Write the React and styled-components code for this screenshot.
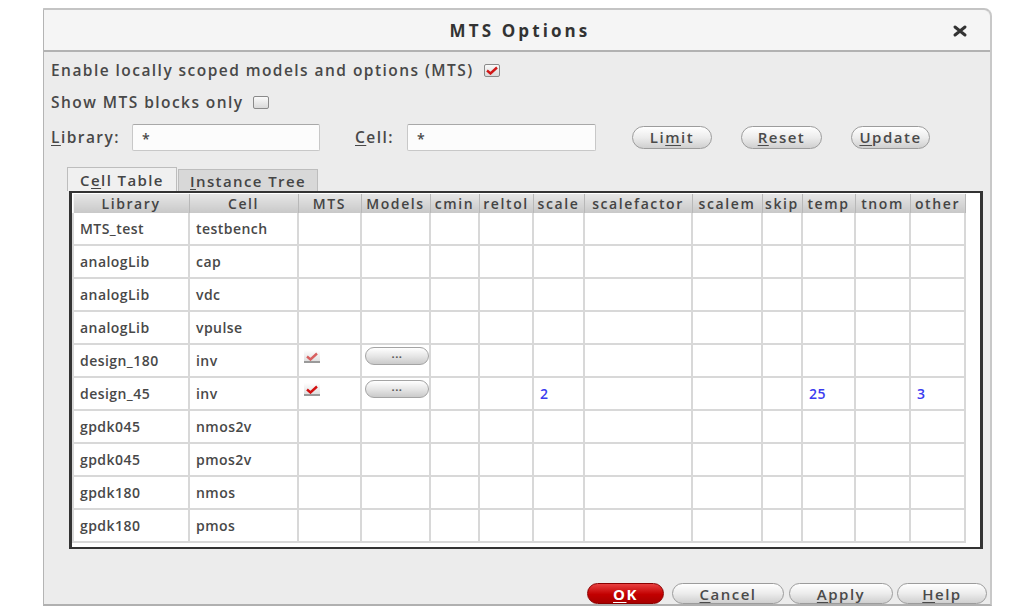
import styled, { createGlobalStyle } from "styled-components";

const Global = createGlobalStyle`
  body {
    margin: 0;
    background: #fff;
    font-family: "Open Sans", "DejaVu Sans", sans-serif;
    color: #454545;
  }
`;

const Page = styled.div`
  padding: 8px 0 0 43px;
  width: 1013px;
  height: 612px;
  box-sizing: border-box;
  overflow: hidden;
`;

const Dialog = styled.div`
  width: 949px;
  height: 598px;
  box-sizing: border-box;
  border: 1px solid #b4b4b4;
  border-top: 2px solid #c4c4c4;
  border-right: 2px solid #c8c8c8;
  border-bottom: 2px solid #b0b0b0;
  border-top-right-radius: 8px;
  background: #ececec;
  display: flex;
  flex-direction: column;
`;

const TitleBar = styled.div`
  height: 40px;
  flex: none;
  background: #f5f5f5;
  border-bottom: 2px solid #b2b2b2;
  border-top-right-radius: 8px;
  display: flex;
  align-items: center;
  justify-content: center;
  position: relative;
`;

const Title = styled.div`
  font-size: 17px;
  font-weight: 700;
  color: #333;
  letter-spacing: 3.1px;
  margin-left: 6px;
`;

const Close = styled.div`
  position: absolute;
  right: 22px;
  top: 12px;
  width: 16px;
  height: 16px;
`;

const Body = styled.div`
  flex: 1;
  padding: 4px 0 0 7px;
  display: flex;
  flex-direction: column;
`;

const Row = styled.div`
  display: flex;
  align-items: center;
  height: ${(p) => p.h || 28}px;
  margin-top: ${(p) => p.mt || 0}px;
  font-size: 15.5px;
  font-weight: 600;
  letter-spacing: 1.45px;
  color: #484848;
`;

const Box = styled.span`
  display: inline-flex;
  align-items: center;
  justify-content: center;
  width: 16px;
  height: 13px;
  margin-left: ${(p) => p.ml || 8}px;
  border: 1px solid #8a8a8a;
  border-radius: 2px;
  background: linear-gradient(#fafafa, #d9d9d9);
  box-sizing: border-box;
`;

const Label = styled.span`
  width: ${(p) => p.w}px;
  flex: none;
`;

const U = styled.span`
  text-decoration: underline;
  text-underline-offset: 2px;
`;

const Input = styled.div`
  width: ${(p) => p.w}px;
  height: 27px;
  box-sizing: border-box;
  background: #fcfcfc;
  border: 1px solid #c8c8c8;
  border-top-color: #a8a8a8;
  border-radius: 2px;
  padding: 4px 0 0 9px;
  font-size: 14px;
  font-weight: 600;
  margin-right: ${(p) => p.mr || 0}px;
  flex: none;
`;

const Pill = styled.div`
  width: ${(p) => p.w}px;
  height: ${(p) => p.h || 23}px;
  margin-left: ${(p) => p.ml || 0}px;
  box-sizing: border-box;
  border-radius: 12px;
  border: 1px solid ${(p) => (p.primary ? "#8a0000" : "#9c9c9c")};
  background: ${(p) =>
    p.primary
      ? "linear-gradient(#e84040, #c20000 55%, #a80000)"
      : "linear-gradient(#ffffff, #ececec 50%, #cfcfcf)"};
  color: ${(p) => (p.primary ? "#fff" : "#4a4a4a")};
  font-size: 15px;
  font-weight: ${(p) => (p.primary ? 700 : 600)};
  letter-spacing: 1.5px;
  display: flex;
  align-items: center;
  justify-content: center;
  flex: none;
`;

const Tabs = styled.div`
  display: flex;
  align-items: flex-end;
  margin: 14px 0 0 16px;
  height: 25px;
`;

const Tab = styled.div`
  width: ${(p) => p.w}px;
  height: ${(p) => (p.active ? 24 : 22)}px;
  box-sizing: border-box;
  border: 1px solid #bdbdbd;
  border-bottom: none;
  background: ${(p) => (p.active ? "#f0f0f0" : "#d8d8d8")};
  font-size: 15px;
  font-weight: 600;
  letter-spacing: 1.4px;
  color: #454545;
  display: flex;
  align-items: center;
  justify-content: center;
  margin-right: 1px;
`;

const Frame = styled.div`
  margin-left: 18px;
  width: 914px;
  height: 358px;
  box-sizing: border-box;
  border: 2px solid #333;
  border-left-width: 3px;
  border-right-width: 3px;
  background: #fff;
  padding: 1px 0 0 0;
`;

const Table = styled.table`
  border-collapse: collapse;
  table-layout: fixed;
  width: 892px;
  font-size: 14px;
  color: #484848;
  letter-spacing: 0.45px;
`;

const Th = styled.th`
  height: 19px;
  padding: 0;
  font-weight: 600;
  font-size: 14px;
  letter-spacing: 1.6px;
  text-align: center;
  background: linear-gradient(#e6e6e6, #c8c8c8);
  border-left: 1px solid #f2f2f2;
  border-right: 1px solid #b8b8b8;
  color: #444;
  white-space: nowrap;
  overflow: hidden;
`;

const Td = styled.td`
  height: 31px;
  padding: 0 0 0 6px;
  border: 2px solid #d8d8d8;
  border-top: none;
  font-weight: 600;
  vertical-align: ${(p) => (p.top ? "top" : "middle")};
  color: ${(p) => (p.num ? "#3b3bf0" : "#484848")};
  white-space: nowrap;
  overflow: hidden;
`;

const Small = styled.span`
  display: inline-flex;
  align-items: flex-end;
  justify-content: center;
  width: 16px;
  height: 11px;
  margin: 5px 0 0 -1px;
  border-bottom: 2px solid #9a9a9a;
  background: linear-gradient(#ffffff, #e0e0e0);
`;

const Dots = styled.div`
  width: 64px;
  height: 18px;
  margin: 2px 0 0 -3px;
  box-sizing: border-box;
  border-radius: 9px;
  border: 1px solid #a4a4a4;
  background: linear-gradient(#ffffff, #e4e4e4 55%, #cacaca);
  font-size: 11px;
  font-weight: 700;
  text-align: center;
  line-height: 12px;
  color: #555;
`;

const Footer = styled.div`
  display: flex;
  justify-content: flex-end;
  margin-top: 34px;
  padding-right: 3px;
`;

const cols = [
  ["Library", 116],
  ["Cell", 109],
  ["MTS", 63],
  ["Models", 69],
  ["cmin", 49],
  ["reltol", 54],
  ["scale", 51],
  ["scalefactor", 108],
  ["scalem", 70],
  ["skip", 40],
  ["temp", 53],
  ["tnom", 55],
  ["other", 55],
];

const rows = [
  ["MTS_test", "testbench"],
  ["analogLib", "cap"],
  ["analogLib", "vdc"],
  ["analogLib", "vpulse"],
  ["design_180", "inv", { mts: "light" }],
  ["design_45", "inv", { mts: "dark", scale: "2", temp: "25", other: "3" }],
  ["gpdk045", "nmos2v"],
  ["gpdk045", "pmos2v"],
  ["gpdk180", "nmos"],
  ["gpdk180", "pmos"],
];

function Check({ color = "#d01818", w = 12 }) {
  return (
    <svg width={w} height="9" viewBox="0 0 12 9">
      <path d="M1 4.5 L4.5 7.5 L11 1.5" fill="none" stroke={color} strokeWidth="2.4" />
    </svg>
  );
}

export default function App() {
  return (
    <Page>
      <Global />
      <Dialog>
        <TitleBar>
          <Title>MTS Options</Title>
          <Close>
            <svg width="16" height="16" viewBox="0 0 16 16">
              <path d="M3 4 L13 12 M13 4 L3 12" stroke="#333" strokeWidth="3" strokeLinecap="round" />
            </svg>
          </Close>
        </TitleBar>
        <Body>
          <Row>
            Enable locally scoped models and options (MTS)
            <Box ml={10}>
              <Check />
            </Box>
          </Row>
          <Row mt={4}>
            Show MTS blocks only
            <Box ml={9} />
          </Row>
          <Row mt={6} h={30}>
            <Label w={81}>
              <U>L</U>ibrary:
            </Label>
            <Input w={188} mr={35}>*</Input>
            <Label w={52}>
              <U>C</U>ell:
            </Label>
            <Input w={189}>*</Input>
            <Pill w={80} ml={36}>
              Li<U>m</U>it
            </Pill>
            <Pill w={81} ml={29}>
              <U>R</U>eset
            </Pill>
            <Pill w={79} ml={29}>
              <U>U</U>pdate
            </Pill>
          </Row>
          <Tabs>
            <Tab w={110} active>
              C<U>e</U>ll Table
            </Tab>
            <Tab w={140}>
              <U>I</U>nstance Tree
            </Tab>
          </Tabs>
          <Frame>
            <Table>
              <colgroup>
                {cols.map(([n, w]) => (
                  <col key={n} style={{ width: w }} />
                ))}
              </colgroup>
              <thead>
                <tr>
                  {cols.map(([n]) => (
                    <Th key={n}>{n}</Th>
                  ))}
                </tr>
              </thead>
              <tbody>
                {rows.map(([lib, cell, ex = {}], i) => (
                  <tr key={i}>
                    <Td>{lib}</Td>
                    <Td>{cell}</Td>
                    <Td top>
                      {ex.mts && (
                        <Small>
                          <Check color={ex.mts === "light" ? "#d86060" : "#d41010"} />
                        </Small>
                      )}
                    </Td>
                    <Td top>{ex.mts && <Dots>...</Dots>}</Td>
                    <Td />
                    <Td />
                    <Td num>{ex.scale}</Td>
                    <Td />
                    <Td />
                    <Td />
                    <Td num>{ex.temp}</Td>
                    <Td />
                    <Td num>{ex.other}</Td>
                  </tr>
                ))}
              </tbody>
            </Table>
          </Frame>
          <Footer>
            <Pill primary w={77} h={21}>
              <U>O</U>K
            </Pill>
            <Pill w={112} h={21} ml={8}>
              <U>C</U>ancel
            </Pill>
            <Pill w={104} h={21} ml={5}>
              <U>A</U>pply
            </Pill>
            <Pill w={90} h={21} ml={4}>
              <U>H</U>elp
            </Pill>
          </Footer>
        </Body>
      </Dialog>
    </Page>
  );
}
